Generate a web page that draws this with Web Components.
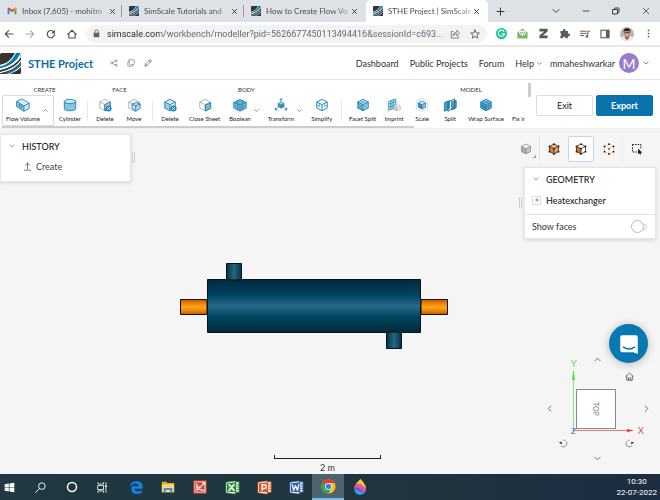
<!DOCTYPE html>
<html lang="en">
<head>
<meta charset="utf-8">
<title>STHE Project | SimScale</title>
<style>
html,body{margin:0;height:100%}
body{font-family:Lato,"Liberation Sans",sans-serif;font-size:9px;color:#333;background:#f5f5f5;overflow:hidden}
</style>
</head>
<body>
<desktop-screen></desktop-screen>
<script>
const cube = (l, r, t, s) => `<path d="M8 1.5 14 4.5 8 7.5 2 4.5Z" fill="${t}"/><path d="M2 4.5 8 7.5V14.5L2 11.5Z" fill="${l}"/><path d="M14 4.5 8 7.5V14.5L14 11.5Z" fill="${r}"/><path d="M8 1.5 14 4.5V11.5L8 14.5 2 11.5V4.5ZM2 4.5 8 7.5 14 4.5M8 7.5V14.5" fill="none" stroke="${s}" stroke-width="1" stroke-linejoin="round"/>`;
const office = (c, inner) => `<path d="M5 2H15V13H5Z" fill="#fff" stroke="${c}"/><path d="M1 2.5 11 1V15L1 13.5Z" fill="#fff" stroke="${c}" stroke-width=".7"/><path d="M2 3.5 12 2.5V13L2 12.5Z" fill="${c}"/>${inner}<path d="M12.5 5H15M12.5 7.500H15M12.5 10H15" stroke="${c}"/>`;
const B = '#1b80b0', L = '#9bd0e8', G = '#aaa';
const dots = (c) => [[8,1.500],[14,4.500],[14,11.500],[8,14.500],[2,11.500],[2,4.500],[8,7.500]].map(p => `<circle cx="${p[0]}" cy="${p[1]}" r="1.300" fill="${c}"/>`).join('');
const line = (d, c = 'currentColor', w = 1.3) => `<path d="${d}" fill="none" stroke="${c}" stroke-width="${w}" stroke-linecap="round" stroke-linejoin="round"/>`;
const ICONS = {
  gmail: '<path d="M1 13V4L4 6V13Z" fill="#4285f4"/><path d="M15 13V4L12 6V13Z" fill="#34a853"/><path d="M1 4.500V3.500Q2 1.500 4 3L8 6 12 3Q14 1.500 15 3.500V4.500L8 10Z" fill="#ea4335"/><path d="M12 3Q14 1.500 15 3.500V5L12 7.200Z" fill="#fbbc04"/>',
  logo: '<rect width="16" height="16" rx="1.200" fill="#39332f"/><path d="M0 9.200Q8 7.500 11.300 0H16V1Q12.500 12 0 13.500Z" fill="#fff"/><path d="M0 10.200Q8.500 8.400 12.200 0H15.800Q11.500 9.500 0 11.800Z" fill="#0878b5"/><path d="M0 12.700Q11 10.500 16 2.500V7Q10 13.500 3 16H0Z" fill="#39332f"/><path d="M0 12.500Q11 10.500 16 2.500M0 15Q11.500 12.500 16 5.800M6 16Q12.500 14 16 10" fill="none" stroke="#fff" stroke-width=".9"/><path d="M2.500 15.600Q11.500 13.200 16 7.300V9.100Q12 14 5.800 15.900Z" fill="#0878b5"/>',
  close: line('M3.500 3.500 12.500 12.500M12.500 3.500 3.500 12.500', 'currentColor', 2.2),
  wclose: line('M2.500 2.500 13.500 13.500M13.500 2.500 2.500 13.500'),
  plus: line('M8 2V14M2 8H14', 'currentColor', 1.8),
  down: line('M2 5 8 11 14 5', 'currentColor', 1.7),
  up: line('M2 11 8 5 14 11', 'currentColor', 1.7),
  left: line('M11 2 5 8 11 14', 'currentColor', 1.7),
  right: line('M5 2 11 8 5 14', 'currentColor', 1.7),
  min: line('M2 8H14', 'currentColor', 1.5),
  restore: line('M2 5H11V14H2ZM5 5V3Q5 2 6 2H13Q14 2 14 3V10Q14 11 13 11H11', 'currentColor', 1.7),
  back: line('M14.500 8H2M7.500 2.500 2 8 7.500 13.500', 'currentColor', 1.7),
  forward: line('M1.500 8H14M8.500 2.500 14 8 8.500 13.500', 'currentColor', 1.7),
  reload: line('M13.500 9A5.800 5.800 0 1 1 12 4.200', 'currentColor', 1.9) + '<path d="M14.300 1V7H8.300Z" fill="currentColor"/>',
  home: line('M1.200 8.500 8 2 14.800 8.500M3 7.500V14.500H13V7.500', 'currentColor', 1.7),
  lock: '<rect x="3" y="6.500" width="10" height="8" rx="1" fill="currentColor"/>' + line('M5 7V4.500A3 3 0 0 1 11 4.500V7', 'currentColor', 1.6),
  share: line('M5 4H2V14.500H13V11M5 10Q6 5 11 5V2L15 6.500 11 10.500V8Q7 7.500 5 10Z', 'currentColor', 1.2),
  star: line('M8 1.500 10 6 15 6.500 11.200 9.800 12.400 14.500 8 12 3.600 14.500 4.800 9.800 1 6.500 6 6Z', 'currentColor', 1.5),
  grammarly: '<circle cx="8" cy="8" r="8" fill="#15c39a"/>' + line('M11.500 5A4.500 4.500 0 1 0 12.300 8.500H9', '#fff', 1.7),
  mail: '<path d="M1 6 8 1 15 6V15H1Z" fill="#58a946"/><path d="M3 3.500H13V9L8 11.500 3 9Z" fill="#f4effa"/><path d="M4.500 5.500 6 8 8 6.500 10 8 11.500 5.500" fill="none" stroke="#8060ab" stroke-width="1"/><path d="M1 7 8 12 15 7V15H1Z" fill="#77bd55"/>',
  zed: '<path d="M2 1H14V5L7 11H14V15H2V11L9 5H2Z" fill="#525a60"/>',
  puzzle: '<path d="M2 4.500H5.500V3.500A2 2 0 0 1 9.500 3.500V4.500H13V8H14A2 2 0 0 1 14 12H13V15H9.700A2.200 2.200 0 0 0 5.300 15H2V11.500A2 2 0 0 0 2 7.800Z" fill="#5a5e62"/>',
  queue: line('M1 3.500H10M1 7H10M1 10.500H6', '#5a5e62', 1.6) + line('M12.500 11.500V3.500H15.500', '#5a5e62', 1.6) + '<circle cx="10.800" cy="12" r="2" fill="#5a5e62"/>',
  side: '<rect x="1.500" y="2" width="13" height="12" fill="none" stroke="#5a5e62" stroke-width="1.800"/><path d="M9.500 2H14.500V14H9.500Z" fill="#5a5e62"/>',
  person: '<circle cx="8" cy="8" r="8" fill="#b4b8b8"/><path d="M1 12 4 10.500H12L15 12A8 8 0 0 1 1 12Z" fill="#e5e8e8"/><path d="M5 9.500H11L10 13 8 15 6 13Z" fill="#a76750"/><ellipse cx="8" cy="6.800" rx="3.300" ry="4.200" fill="#c48a6b"/><path d="M4.300 6.500Q3.500 1.500 8 1.500T11.700 6.500L10.800 4.500H5.200Z" fill="#28201e"/><path d="M4.800 6.300H11.200" stroke="#40302c" stroke-width=".7"/><path d="M6.500 9.200Q8 10 9.500 9.200" stroke="#fff" fill="none" stroke-width=".7"/>',
  more: '<circle cx="8" cy="2.500" r="1.500" fill="#555"/><circle cx="8" cy="8" r="1.500" fill="#555"/><circle cx="8" cy="13.500" r="1.500" fill="#555"/>',
  nodes: line('M5 7.200 11 4M5 8.800 11 12') + '<g fill="#fff" stroke="currentColor" stroke-width="1.200"><circle cx="3.500" cy="8" r="2"/><circle cx="12.500" cy="3.500" r="2"/><circle cx="12.500" cy="12.500" r="2"/></g>',
  copy: line('M4.500 1.500H12.500Q14.500 1.500 14.500 3.500V9.500Q14.500 11.500 12.500 11.500H6.500Q4.500 11.500 4.500 9.500ZM4 4.500Q1.500 4.500 1.500 6.500V12.500Q1.500 14.500 3.500 14.500H9.500Q11.500 14.500 11.500 12', 'currentColor', 1.2),
  pencil: line('M2 14 3 10 11 2Q12.500.8 14 2.200T14 5L6 13ZM9.800 3.200 12.800 6.200M3 10 6 13', 'currentColor', 1.4),
  flow: '<path d="M1 4 7 1 15 6 9 9Z" fill="#dff0f8"/><path d="M1 4 9 9V15L1 10Z" fill="#8bc7e1"/><path d="M15 6 9 9V15L15 12Z" fill="#c9e6f2"/>' + line('M1 4 7 1 15 6V12L9 15 1 10ZM1 4 9 9 15 6M9 9V15', B, 1) + line('M4 7.500 6.500 9V11L4 9.500Z', B, .9),
  cylinder: '<path d="M1.500 4V12Q1.500 14.500 8 14.500T14.500 12V4Z" fill="#86c4df"/><ellipse cx="8" cy="4" rx="6.500" ry="2.500" fill="#c5e4f1" stroke="#1b80b0"/>' + line('M1.500 4V12Q1.500 14.500 8 14.500T14.500 12V4', B, 1),
  facedel: cube('#fafafa', L, '#fff', G) + line('M8 7.500 14 4.500V11.500L8 14.500Z', B, 1) + `<circle cx="12" cy="12" r="3.500" fill="${B}"/>` + line('M10.500 10.500 13.500 13.500M13.500 10.500 10.500 13.500', '#fff', 1),
  move: cube('#fff', L, '#fff', G) + '<path d="M6 7 11 5 15 7V12L10 15 6 12Z" fill="#b9deee"/>' + line('M6 7 11 5 15 7V12L10 15 6 12ZM6 7 10 9 15 7M10 9V15', B, 1),
  bodydel: cube(L, '#d7edf6', '#d7edf6', B) + `<circle cx="12" cy="12" r="3.500" fill="${B}"/>` + line('M10.500 10.500 13.500 13.500M13.500 10.500 10.500 13.500', '#fff', 1),
  sheet: cube('#fafafa', '#eee', '#fff', G) + '<path d="M8.500 8 14.500 5.500V12L8.500 15Z" fill="#74b8d8" stroke="#1b80b0"/>',
  boolean: '<path d="M.8 5 8 1.500 15.200 5V11.500L8 15 .8 11.500Z" fill="#63b0d2"/>' + line('M.8 5 8 8 15.200 5M5 4V14M11 4V14M8 8V14.500M.8 5 8 1.500 15.200 5V11.500L8 15 .8 11.500Z', B, .8),
  transform: '<g transform="translate(3.500 3.500) scale(.57)">' + cube('#3c92bd', '#3c92bd', L, B) + '</g>' + line('M8 4V1M6.800 2 8 .8 9.200 2M4 11 1.500 13.500M1.500 11.500V13.700H3.500M12 11 14.500 13.500M14.500 11.500V13.700H12.500', B, 1),
  simplify: cube('#e7f4fa', '#f8fcfe', '#f8fcfe', B) + line('M5 6V10L2 8M11 6V10L14 8', B, .7),
  facet: cube('#77b9d7', '#b5dced', '#d9edf6', B) + line('M2 11.500 8 7.500 14 11.500M5 3 11 6M11 3 5 6M2 4.500 8 14.500 14 4.500', B, .6),
  imprint: '<path d="M2 4 10 1V11L2 14Z" fill="#bfe0ef"/>' + line('M2 4 10 1V11L2 14ZM4.500 3V13M7 2V12M2 7 10 4M2 10.500 10 7.500', B, .8) + '<g transform="translate(6.500 6) scale(.62)">' + cube('#ccc', '#eee', '#f5f5f5', G) + '</g>',
  scale: line('M8 .7 14.500 4V12L8 15.300 1.500 12V4Z', '#a7d4e9', .8) + '<g transform="translate(2.400 2.400) scale(.7)">' + cube('#328db9', '#83c0dc', '#d3eaf4', '#126e9d') + '</g>',
  split: '<path d="M2 5 8 2V12L2 15ZM10 4 15 2V11L10 14Z" fill="#4ca1c8"/>' + line('M2 5 6 3.500V13L2 15ZM6 5 13 1V11L6 15ZM10 3V13M13 4 15 3V11L11 13', '#176f9c', 1),
  wrap: cube('#4a9cc4', '#5dacd0', '#8ec7e1', '#1b7bab') + line('M2 8 8 11 14 8M5 3 11 6V13M11 3 5 6V13', '#1b7bab', .7),
  solid: cube('#aaa', '#c7c7c7', '#f4f4f4', '#888'),
  volume: cube('#ef7c22', '#f59a53', '#ffb478', '#222') + dots('#222'),
  face: cube('#f26a0a', '#fff', '#fff', '#222') + dots('#222'),
  vertex: cube('#fff', '#fff', '#fff', '#e6bd9d') + dots('#222') + '<circle cx="8" cy="7.500" r="1.200" fill="#e87722"/>',
  select: '<path d="M2 2H13V8M2 2V12H8" fill="none" stroke="#222" stroke-width="1.400" stroke-dasharray="2 1.500"/><path d="M9.500 7.500V15L11.300 13.500 12.500 15.500 13.500 15 12.600 13H15Z" fill="#111"/>',
  upload: line('M8 12V2M4.500 5.500 8 2 11.500 5.500M2.500 14.500H13.500', 'currentColor', 1.3),
  orbitl: '<path d="M3.500 12A6 6 0 0 0 12.500 4Q9 1 6 2.500" fill="none" stroke="#777" stroke-width="1.400" stroke-dasharray="19 2 3 2"/><path d="M0 6.500 4.500 4.500 5 9.500Z" fill="#222"/>',
  orbitr: '<path d="M12.500 12A6 6 0 0 1 3.500 4Q7 1 10 2.500" fill="none" stroke="#777" stroke-width="1.400" stroke-dasharray="19 2 3 2"/><path d="M16 6.500 11.500 4.500 11 9.500Z" fill="#222"/>',
  house: line('M1.500 8 8 1.800 14.500 8M3 7V14.500H13V7M6 14.500V10.500H10V14.500', 'currentColor', 1.3),
  chat: '<path d="M2.500 1H13.500Q15 1 15 2.500V16L11.500 14.500H2.500Q1 14.500 1 13V2.500Q1 1 2.500 1Z" fill="#fff"/>' + line('M3.500 10.500Q8 13.500 12.500 10.500', '#0872aa', 1),
  windows: '<path d="M1 3.200 7 2.300V7.600H1ZM8 2.100 15 1V7.600H8ZM1 8.500H7V13.700L1 12.800ZM8 8.500H15V15L8 13.900Z" fill="#fff"/>',
  search: '<circle cx="10" cy="6" r="4.800" fill="none" stroke="#fff" stroke-width="1.300"/>' + line('M6.500 9.500 1 15', '#fff', 1.4),
  ring: '<circle cx="8" cy="8" r="6" fill="none" stroke="#fff" stroke-width="2"/>',
  tasks: line('M1.500 1V3H9.500V1M1.500 15V13H9.500V15M1.500 5H9.500V11H1.500ZM13 1V4M13 8.500V15', '#fff', 1.2) + '<rect x="11.500" y="5" width="3" height="2.500" fill="#fff"/>',
  edge: '<path d="M1 8Q1.500 1 8.500 1T15.500 8.500V10H6Q6.300 13 10 13 12.500 13 14.500 11.800V14.500Q12.500 16 9 16 3.500 16 2.700 11 2.400 7 6.500 5 5.800 6 5.700 7H11Q10.800 4 7.500 4 3.500 4 1 8Z" fill="#0a84e8"/>',
  folder: '<path d="M1 2H6L7.500 3.500H15V14H1Z" fill="#e9a82b"/><path d="M1 5H15V14H1Z" fill="#ffd870"/><path d="M3 14V9H13V14H10.500V11.500H5.500V14Z" fill="#3694df"/>',
  redapp: '<rect x="1" y="1" width="14" height="14" fill="#f1ded8" stroke="#c8332b" stroke-width="1.200"/><path d="M2.500 2.500H10L13 6V13.500H2.500Z" fill="#d2473b"/>' + line('M4.500 12 12.500 4M4.500 4.500V12M4.500 8H9M7 10.500 12 12', '#fff', 1.2),
  excel: office('#2d8b3d', line('M4.500 5 9.500 11M9.500 5 4.500 11', '#fff', 1.8)),
  ppt: office('#dd552b', '<path d="M5.500 11.500V5H8Q9.800 5 9.800 7T8 9H5.500" fill="none" stroke="#fff" stroke-width="1.500"/>'),
  word: office('#315fa7', line('M3.500 5 5 11 7 6 9 11 10.500 5', '#fff', 1.4)),
  chrome: '<circle cx="8" cy="8" r="7.500" fill="#fbc116"/><path d="M8 8 1.500 4.200A7.500 7.500 0 0 1 14.500 4.200H8Z" fill="#e33b2e"/><path d="M8 8 1.500 4.200A7.500 7.500 0 0 0 8 15.500L11 9.500Z" fill="#2da94f"/><circle cx="8" cy="8" r="3.700" fill="#fff"/><circle cx="8" cy="8" r="2.900" fill="#347fe8"/>',
  drop: '<path d="M8.500 0Q14 6 14 10A5.800 5.800 0 0 1 2.300 10Q2 6 8.500 0Z" fill="#28a8ec"/><path d="M8.500 0Q14 6 14 9.500L3.500 5.500Z" fill="#ffc928"/><path d="M4 5Q8 4 10 6T14 9Q14 12 12.500 13.500 10 9.500 2.300 9Q2.300 7 4 5Z" fill="#e8568f"/><path d="M2.300 9Q6 7 8.500 10T13 13L12 14.300Q9 13 2.300 10Z" fill="#7755d0"/>'
};

const define = (name, css, html) => customElements.define(name, class extends HTMLElement {
  constructor() {
    super();
    this.attachShadow({ mode: 'open' });
  }
  connectedCallback() {
    const body = typeof html === 'function' ? html(this) : html;
    this.shadowRoot.innerHTML = `<style>*{box-sizing:border-box}button{font:inherit;color:inherit;background:none;border:0;padding:0;margin:0}a{color:inherit;text-decoration:none}${css}</style>${body}`;
  }
});
const attr = (el, n, d = '') => el.getAttribute(n) ?? d;
const icon = (n, s = 10) => `<ui-icon name="${n}" style="--size:${s}px"></ui-icon>`;
const iconButton = (n, label, s = 10) => `<button aria-label="${label}">${icon(n, s)}</button>`;

define('ui-icon', ':host{display:inline-block;flex:none;width:var(--size,10px);height:var(--size,10px)}svg{display:block;width:100%;height:100%;overflow:visible}',
  el => `<svg viewBox="0 0 16 16" aria-hidden="true">${ICONS[attr(el, 'name')]}</svg>`);

define('browser-tab', `
:host{display:flex;box-sizing:border-box;align-items:center;width:122px;height:22px;padding:0 8px 0 7px;gap:5px;color:#4a4d51;font:8px Lato,sans-serif}
:host([active]){background:#fff;border-radius:5px 5px 0 0}
.t{flex:1;white-space:nowrap;overflow:hidden;margin-right:-2px;mask-image:linear-gradient(90deg,#000 80%,#0006)}
.d{width:1px;height:12px;margin-right:-8px;background:#94979c}
button{display:flex;color:#333}`,
  el => `${icon(attr(el, 'icon'), 10)}<span class="t"><slot></slot></span>${iconButton('close', 'Close tab', 7)}${el.hasAttribute('divided') ? '<span class="d"></span>' : ''}`);

define('browser-bar', `
:host{display:block;background:#fff;border-bottom:2px solid #e8e8e8}
.tabs{display:flex;align-items:center;height:22px;background:#dee1e6}
.new{margin-left:8px}
.win{display:flex;margin-left:auto;gap:22px;padding-right:10px;color:#222}
button{display:flex}
.bar{display:flex;align-items:center;height:23px;padding:0 7px 0 4px;color:#4d5156}
.nav{display:flex;gap:11px;padding-right:9px}
.nav button:nth-child(2){color:#aaa}
.url{flex:1;display:flex;align-items:center;gap:6px;height:18px;border-radius:9px;background:#f1f3f4;padding:0 7px 0 6px;color:#5f6368}
input{flex:1;min-width:0;border:0;padding:0;font:9px Roboto,sans-serif;-webkit-text-fill-color:transparent;background:linear-gradient(90deg,#202124 52px,#5f6368 52px);background-clip:text}
.ext{display:flex;align-items:center;gap:10px;padding-left:9px}
.url button+button{margin-left:4px}`,
  `<div class="tabs">
    <browser-tab icon="gmail" divided>Inbox (7,605) - mohitm</browser-tab>
    <browser-tab icon="logo" divided>SimScale Tutorials and</browser-tab>
    <browser-tab icon="logo">How to Create Flow Vo</browser-tab>
    <browser-tab icon="logo" active>STHE Project | SimScale</browser-tab>
    <span class="new">${iconButton('plus', 'New tab', 9)}</span>
    <div class="win">${iconButton('down', 'Search tabs', 8)}${iconButton('min', 'Minimise', 8)}${iconButton('restore', 'Restore', 8)}${iconButton('wclose', 'Close', 8)}</div>
  </div>
  <div class="bar">
    <div class="nav">${iconButton('back', 'Back')}${iconButton('forward', 'Forward')}${iconButton('reload', 'Reload')}${iconButton('home', 'Home')}</div>
    <div class="url">${icon('lock', 9)}<input aria-label="Address" value="simscale.com/workbench/modeller?pid=5626677450113494416&amp;sessionId=c693...">${iconButton('share', 'Share')}${iconButton('star', 'Bookmark')}</div>
    <div class="ext">${iconButton('grammarly', 'Grammarly', 11)}${iconButton('mail', 'Mail tracker', 11)}${iconButton('zed', 'Z extension', 11)}${iconButton('puzzle', 'Extensions', 11)}${iconButton('queue', 'Media')}${iconButton('side', 'Side panel')}${iconButton('person', 'Profile', 14)}${iconButton('more', 'Menu', 9)}</div>
  </div>`);

define('app-header', `
:host{display:flex;box-sizing:border-box;align-items:center;height:33px;background:#fff;border-bottom:1px solid #e3e3e3;padding-right:11px}
h1{margin:0 17px 0 7px;font-size:11px;font-weight:700;color:#0b6ca5}
.act{display:flex;gap:9px;color:#666}
button{display:flex;align-items:center;gap:4px}
nav{display:flex;align-items:center;gap:11px;margin-left:auto;font-size:9px}
.help{gap:3px}
.user{gap:4px;margin-left:8px;font-size:9px}
.m{display:grid;place-items:center;width:20px;height:20px;border-radius:50%;background:#9a7bcc;color:#fff;font-size:14px}`,
  `${icon('logo', 21)}<h1>STHE Project</h1>
  <div class="act">${iconButton('nodes', 'Share project', 8)}${iconButton('copy', 'Duplicate', 8)}${iconButton('pencil', 'Edit', 8)}</div>
  <nav><a href="#">Dashboard</a><a href="#">Public Projects</a><a href="#">Forum</a><button class="help">Help ${icon('down', 5)}</button></nav>
  <button class="user">mmaheshwarkar <span class="m">M</span>${icon('down', 6)}</button>`);

define('tool-button', `
:host{display:block;flex:none}
button{display:flex;align-items:center;height:31px;gap:3px;border-radius:2px}
.c{display:flex;flex-direction:column;align-items:center;gap:3px;min-width:20px;font-size:6px;line-height:8px;white-space:nowrap;color:#222}
:host([plain]) .c{min-width:0}
.e{height:14px}
:host([open]) button{border:1px solid #ddd;padding:0 5px 0 3px;background:#fff;box-shadow:0 0 1px #ddd}`,
  el => `<button><span class="c">${attr(el, 'icon') ? icon(attr(el, 'icon'), 14) : '<span class="e"></span>'}<slot></slot></span>${el.hasAttribute('menu') ? icon(el.hasAttribute('open') ? 'up' : 'down', 5) : ''}</button>`);

define('tool-group', `
:host{display:flex;flex:none;flex-direction:column;width:var(--w);height:46px}
h2{margin:0;height:15px;padding-top:6px;font-size:6px;line-height:8px;font-weight:400;text-align:center;color:#333}
.r{display:flex;gap:var(--gap,9px);padding-left:8px;height:31px;background:linear-gradient(#e8e8e8,#e8e8e8) 0 5px/1px 21px no-repeat}
:host([first]) .r{gap:5px;padding-left:0;background:none}`,
  el => `<h2>${attr(el, 'label')}</h2><div class="r"><slot></slot></div>`);

define('model-toolbar', `
:host{display:flex;box-sizing:border-box;align-items:flex-start;height:49px;background:#fff;border-bottom:1px solid #eee}
.scroll{flex:1;min-width:0}
.groups{display:flex;overflow:hidden;padding-left:2px;height:46px}
.h{height:2px;width:78%;margin-left:2px;background:#ccc}
.v{width:3px;height:14px;margin-top:3px;background:#ccc}
.end{display:flex;gap:3px;padding:15px 7px 0 5px;font-size:9px}
.end button{width:57px;height:21px;border:1px solid #ddd;border-radius:2px;color:#222}
.end .p{background:#0874ab;border-color:#0874ab;color:#fff;font-weight:700}`,
  `<div class="scroll"><div class="groups">
    <tool-group first label="CREATE" style="--w:85px"><tool-button icon="flow" menu open>Flow Volume</tool-button><tool-button icon="cylinder">Cylinder</tool-button></tool-group>
    <tool-group label="FACE" style="--w:65px"><tool-button icon="facedel">Delete</tool-button><tool-button icon="move">Move</tool-button></tool-group>
    <tool-group label="BODY" style="--w:189px"><tool-button icon="bodydel">Delete</tool-button><tool-button icon="sheet">Close Sheet</tool-button><tool-button icon="boolean" menu>Boolean</tool-button><tool-button icon="transform" menu>Transform</tool-button><tool-button icon="simplify">Simplify</tool-button></tool-group>
    <tool-group label="MODEL" style="--w:260px;--gap:8px"><tool-button icon="facet">Facet Split</tool-button><tool-button icon="imprint">Imprint</tool-button><tool-button icon="scale">Scale</tool-button><tool-button icon="split">Split</tool-button><tool-button icon="wrap">Wrap Surface</tool-button><tool-button plain>Fix ir</tool-button></tool-group>
  </div><div class="h"></div></div><div class="v"></div>
  <div class="end"><button>Exit</button><button class="p">Export</button></div>`);

define('side-panel', `
:host{display:block;box-sizing:border-box;background:#fff;border:1px solid #e6e6e6;box-shadow:0 1px 4px #0002;font-size:9px}
h2{display:flex;align-items:center;gap:7px;margin:0;height:22px;padding-left:8px;font-size:9px;font-weight:500;color:#222}
ui-icon{color:#666}`,
  el => `<h2>${icon('down', 6)}${attr(el, 'label')}</h2><slot></slot>`);

define('tree-row', `
:host{display:flex;box-sizing:border-box;align-items:center;gap:4px;height:19px;color:#444;padding-left:22px}
:host([bold]){height:24px;color:#222;font-weight:500;padding:0 0 4px 7px;gap:5px}
.x{display:grid;place-items:center;width:9px;height:9px;border:1px solid #ddd}`,
  el => `${el.hasAttribute('bold') ? `<button class="x" aria-label="Expand">${icon('plus', 4)}</button>` : icon('upload', 9)}<slot></slot>`);

define('toggle-row', `
:host{display:block;border-top:1px solid #e3e3e3}
label{display:flex;align-items:center;justify-content:space-between;height:23px;padding:0 8px 0 7px;color:#333}
input{appearance:none;display:flex;align-items:center;margin:0;width:16px;height:6px;border:1px solid #ccc;border-radius:3px}
input::before{content:"";flex:none;width:11px;height:11px;margin-left:-1px;border:1px solid #bbb;border-radius:50%;background:#fff}`,
  '<label><slot></slot><input type="checkbox"></label>');

define('drag-handle', ':host{display:block;box-sizing:border-box;width:3px;height:11px;border:solid #ccc;border-width:0 1px}', '');

define('view-modes', `
:host{display:flex;align-items:center;padding-right:5px}
button{display:grid;place-items:center;width:28px;height:26px;border:1px solid transparent;border-radius:2px}
.on{background:#fff;border-color:#b9dcec;width:26px}
.s{border-right:1px solid #e8e8e8;width:29px}
i{align-self:flex-end;width:3px;height:3px;margin:0 0 4px -7px;border:solid #999;border-width:0 1px 1px 0}
.v{margin-left:4px}`,
  `<button class="s" aria-label="Shading">${icon('solid', 12)}</button><i></i><button class="v" aria-label="Select volumes">${icon('volume', 12)}</button><button class="on" aria-label="Select faces">${icon('face', 12)}</button><button class="s" aria-label="Select vertices">${icon('vertex', 12)}</button><button aria-label="Box select">${icon('select', 12)}</button>`);

define('exchanger-model', ':host{display:block;width:268px}svg{display:block;width:100%}',
  `<svg viewBox="0 0 268 87" role="img" aria-label="Heat exchanger model"><defs>
  <linearGradient id="s" x2="0" y2="1"><stop stop-color="#002b3d"/><stop offset=".3" stop-color="#004461"/><stop offset=".5" stop-color="#296b8a"/><stop offset=".7" stop-color="#004461"/><stop offset="1" stop-color="#002b3d"/></linearGradient>
  <linearGradient id="n"><stop stop-color="#00344a"/><stop offset=".5" stop-color="#266682"/><stop offset="1" stop-color="#00344a"/></linearGradient>
  <linearGradient id="o" x2="0" y2="1"><stop stop-color="#b85c00"/><stop offset=".28" stop-color="#ee8507"/><stop offset=".5" stop-color="#ffa620"/><stop offset=".75" stop-color="#ee8507"/><stop offset="1" stop-color="#b85c00"/></linearGradient></defs>
  <g stroke="#111"><path d="M.5 36.500H27V51.500H.5ZM241 36.500H267.500V51.500H241Z" fill="url(#o)"/><path d="M46.500.5H61.500V19H46.500Z" fill="url(#n)"/><path d="M206.500 68H221.500V85.500H206.500Z" fill="url(#n)"/><path d="M27.500 16.500H240.500V69.500H27.500Z" fill="url(#s)"/><path d="M46.500 16.500Q54 19 61.500 16.500M206.500 69.500Q214 67 221.500 69.500" fill="#174d67"/></g></svg>`);

define('view-cube', `
:host{display:grid;grid-template-columns:10px 1fr 10px;grid-template-rows:10px 1fr 10px;align-items:center;justify-items:center;width:107px;height:109px;color:#444;position:relative}
button{display:flex}
svg{position:absolute;inset:0;width:100%;height:100%}
.l{grid-area:2/1}.r{grid-area:2/3}.u{grid-area:1/2}.d{grid-area:3/2}
.home,.ol,.or{position:absolute;z-index:1}.home{right:17px;top:18px}.ol{left:15px;bottom:15px}.or{right:17px;bottom:15px}
text{font-family:Lato,sans-serif}`,
  `<svg viewBox="0 0 107 109"><path d="M30 76.500H83" stroke="#ec7777"/><path d="M83 75 90 76.500 83 78Z" fill="#e33"/><path d="M29.500 77V17" stroke="#7bed7b"/><path d="M28 26 29.500 16 31 26Z" fill="#46dc46"/><rect x="32.500" y="35.500" width="39" height="39" fill="#fff" stroke="#888"/><text x="27" y="13" font-size="9" fill="#55dc55">Y</text><text x="94" y="80" font-size="9" fill="#e54545">X</text><text x="27" y="80" font-size="8" fill="#4455e8">Z</text><text transform="translate(49 48) rotate(90)" font-size="7" fill="#777">TOP</text></svg>
  <button class="u" aria-label="Rotate up">${icon('up', 7)}</button><button class="l" aria-label="Rotate left">${icon('left', 7)}</button><button class="r" aria-label="Rotate right">${icon('right', 7)}</button><button class="d" aria-label="Rotate down">${icon('down', 7)}</button>
  <button class="home" aria-label="Home view">${icon('house', 9)}</button><button class="ol" aria-label="Roll left">${icon('orbitl', 9)}</button><button class="or" aria-label="Roll right">${icon('orbitr', 9)}</button>`);

define('model-canvas', `
:host{display:block;position:relative;background:#f5f5f5;overflow:hidden}
.top{display:flex;justify-content:space-between;align-items:flex-start;padding:5px 4px 0 0}
.hist,.geo{display:flex;gap:1px}
.hist side-panel{width:131px;height:48px}
.hist drag-handle{margin-top:18px}
.right{display:flex;flex-direction:column;align-items:flex-end;gap:5px;padding-top:2px}
.geo{gap:2px}
.geo side-panel{width:132px}
.geo drag-handle{margin-top:30px}
exchanger-model{position:absolute;left:180px;top:134px}
.chat{position:absolute;right:12px;bottom:111px;display:grid;place-items:center;width:39px;height:39px;border-radius:50%;background:#0878b2;box-shadow:0 1px 8px #0004}
view-cube{position:absolute;right:9px;bottom:11px}
.scale{position:absolute;left:274px;bottom:0;width:107px;text-align:center;font-size:9px;line-height:12px;color:#333}
.scale::before{content:"";display:block;height:3px;margin-bottom:3px;border:solid #222;border-width:0 1px 1px}`,
  `<div class="top"><div class="hist"><side-panel label="HISTORY"><tree-row>Create</tree-row></side-panel><drag-handle></drag-handle></div>
  <div class="right"><view-modes></view-modes><div class="geo"><drag-handle></drag-handle><side-panel label="GEOMETRY"><tree-row bold>Heatexchanger</tree-row><toggle-row>Show faces</toggle-row></side-panel></div></div></div>
  <exchanger-model></exchanger-model>
  <div class="scale">2 m</div><view-cube></view-cube>
  <button class="chat" aria-label="Open chat">${icon('chat', 20)}</button>`);

define('task-bar', `
:host{display:flex;box-sizing:border-box;align-items:stretch;height:26px;padding-right:3px;background:linear-gradient(90deg,#203841,#20353e 60%,#1c2c42);color:#fff;font:8px Roboto,sans-serif}
.sys,.apps{display:flex}
button{display:grid;place-items:center;width:32px}
.sys button{width:31px}
.sys{margin-left:-6px;padding-right:2px}
.on{background:#4f636c;border-bottom:2px solid #76b9ed}
time{margin-left:auto;text-align:center;line-height:11px;padding-top:2px}`,
  `<div class="sys">${iconButton('windows', 'Start', 11)}${iconButton('search', 'Search', 11)}${iconButton('ring', 'Cortana', 12)}${iconButton('tasks', 'Task view', 11)}</div>
  <div class="apps">${iconButton('edge', 'Edge', 14)}${iconButton('folder', 'Files', 14)}${iconButton('redapp', 'Reader', 14)}${iconButton('excel', 'Excel', 15)}${iconButton('ppt', 'PowerPoint', 15)}${iconButton('word', 'Word', 15)}<button class="on" aria-label="Chrome">${icon('chrome', 15)}</button>${iconButton('drop', 'Paint', 16)}</div>
  <time datetime="2022-07-22T10:30">10:30<br>22-07-2022</time>`);

define('desktop-screen', ':host{display:flex;flex-direction:column;height:100vh}model-canvas{flex:1;min-height:0}',
  '<browser-bar></browser-bar><app-header></app-header><model-toolbar></model-toolbar><model-canvas></model-canvas><task-bar></task-bar>');
</script>
</body>
</html>
